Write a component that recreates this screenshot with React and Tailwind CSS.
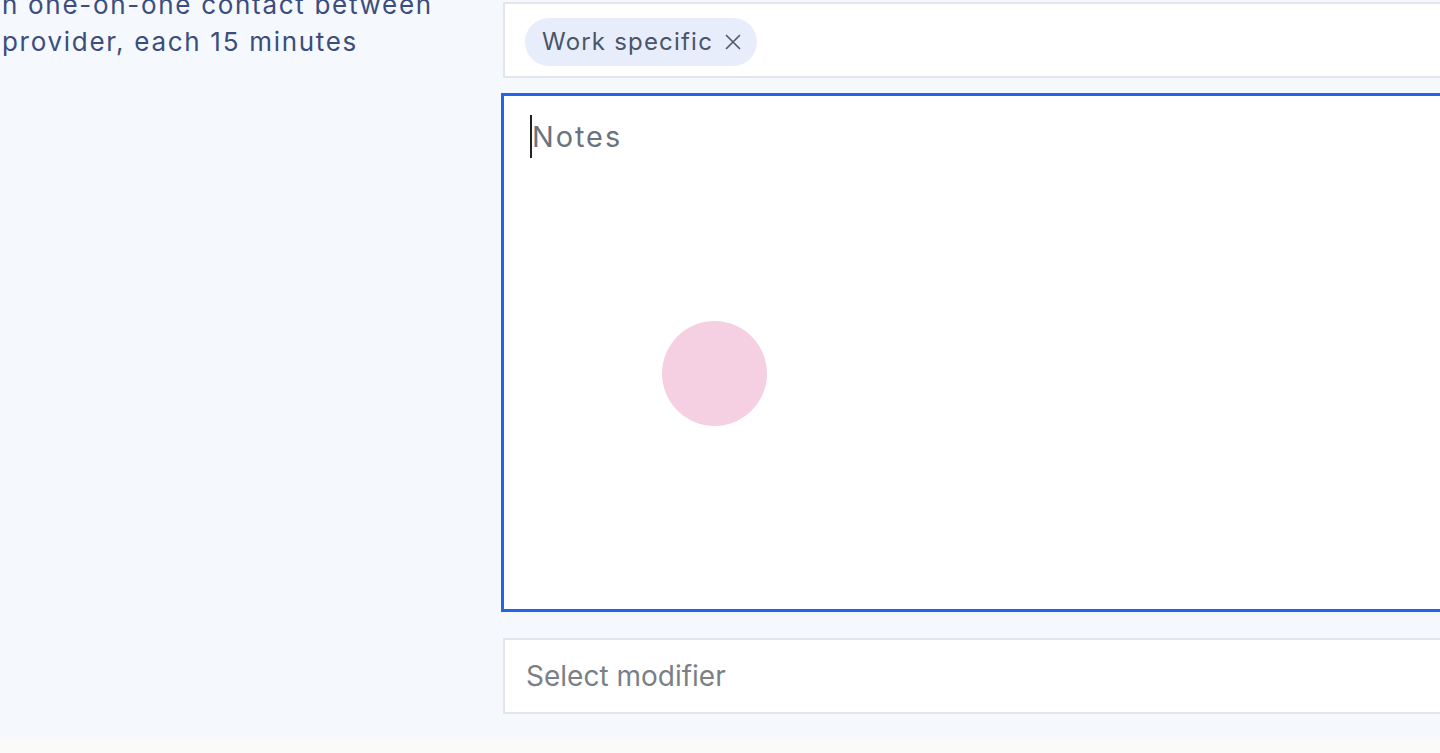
import React from "react";

export default function App() {
  return (
    <div className="w-full h-[753px] overflow-hidden bg-[#fafafa] flex flex-col" style={{ fontFamily: "Inter, 'Noto Sans', sans-serif" }}>
      <div className="h-[737px] shrink-0 bg-[#f5f8fd] flex overflow-hidden relative">
        <div className="w-[501px] shrink-0 pl-[2px]">
          <p className="mt-[-14px] text-[26px] leading-[37px] tracking-[1.7px] text-[#3c4d7d] whitespace-nowrap">
            n one-on-one contact between
            <br />
            provider, each 15 minutes
          </p>
        </div>
        <div className="flex flex-col w-[1000px] shrink-0">
          <div className="mt-[2px] ml-[2px] h-[76px] border-2 border-[#e2e5ec] bg-white flex items-start pl-[20px] pt-[14px]">
            <div className="h-[48px] rounded-full bg-[#e8edfc] pl-[17px] pr-[16px] flex items-center gap-[12px]">
              <span className="text-[24px] tracking-[1.2px] text-[#4a5568] whitespace-nowrap">Work specific</span>
              <svg width="16" height="16" viewBox="0 0 16 16" fill="none" stroke="#525b68" strokeWidth="1.7" strokeLinecap="round">
                <path d="M1.5 1.5 L14.5 14.5 M14.5 1.5 L1.5 14.5" />
              </svg>
            </div>
          </div>
          <div className="mt-[15px] h-[519px] border-[3px] border-[#2563eb] bg-white pl-[26px] pt-[19px] relative">
            <div className="flex items-center h-[43px]">
              <span className="w-[2px] h-[43px] bg-[#222]" />
              <span className="text-[28.8px] tracking-[2px] text-[#6b7280] leading-[43px]">Notes</span>
            </div>
            <div className="absolute left-[158px] top-[225px] w-[105px] h-[105px] rounded-full bg-[#f5cfe2]" />
          </div>
          <div className="mt-[26px] ml-[2px] h-[76px] border-2 border-[#e2e5ec] bg-white flex items-center pl-[21px]">
            <span className="text-[28px] text-[#7b7f87] leading-[43px] whitespace-nowrap">Select modifier</span>
          </div>
        </div>
      </div>
      <div className="h-[16px] bg-[#fafafa]" />
    </div>
  );
}
